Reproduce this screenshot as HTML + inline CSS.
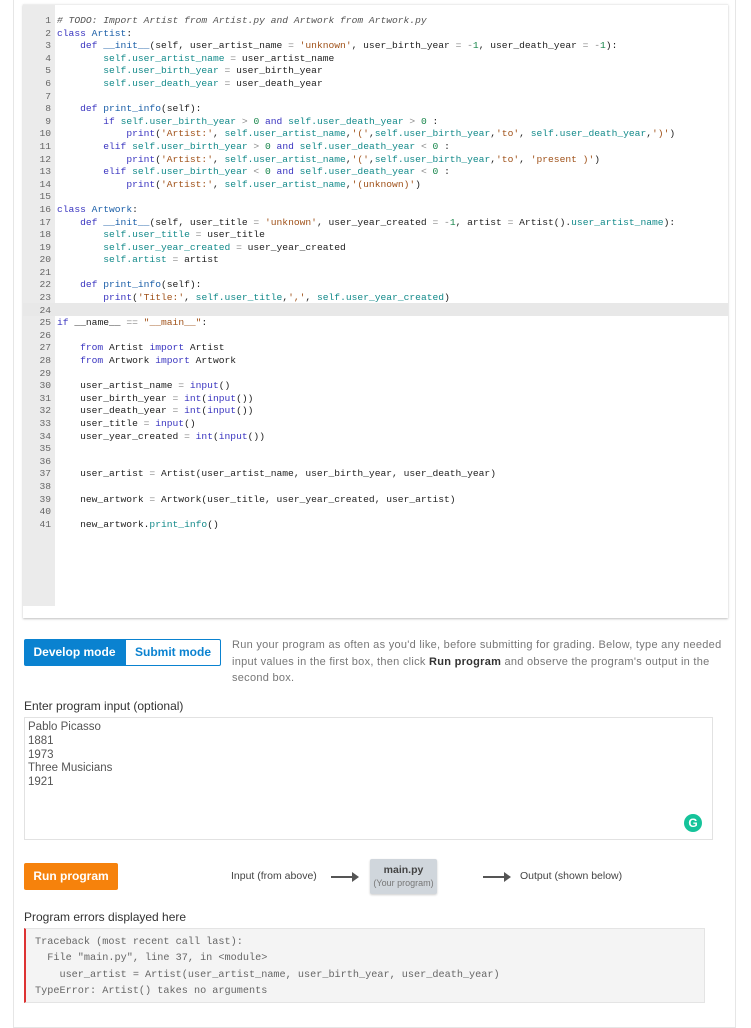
<!DOCTYPE html>
<html><head><meta charset="utf-8"><style>
*{box-sizing:border-box;margin:0;padding:0}
body{width:751px;height:1024px;background:#fff;font-family:"Liberation Sans",sans-serif;position:relative;overflow:hidden}
.card{position:absolute;left:13px;top:-2px;width:723px;height:1030px;border:1px solid #e6e6e6;background:#fff}
.ed{position:absolute;left:23px;top:4px;width:705px;height:614px;background:#fff;box-shadow:0 1px 2px rgba(0,0,0,.25);border-top:1px solid #eee}
.gut{position:absolute;left:0;top:0;width:32px;height:601px;background:#ebebeb}
.code{position:absolute;left:0;top:10px;font-family:"Liberation Mono",monospace;font-size:9.65px;line-height:12.6px;white-space:pre;color:#222}
.ln{display:inline-block;width:28px;text-align:right;color:#666;margin-right:6px}
.hl{position:absolute;left:0;top:298px;width:705px;height:12.6px;background:#e8e8e8}
.k{color:#3a35c0}.d{color:#1b5fa8}.s{color:#a0521a}.n{color:#16854a}.v{color:#138a8a}.c{color:#555;font-style:italic}.o{color:#888}
.btn1{position:absolute;left:24px;top:639px;width:101px;height:27px;background:#0a82d0;color:#fff;font-weight:bold;font-size:12px;line-height:27px;text-align:center;border-radius:2px 0 0 2px}
.btn2{position:absolute;left:125px;top:639px;width:96px;height:27px;border:1px solid #0a82d0;color:#0a82d0;font-weight:bold;font-size:12px;line-height:25px;text-align:center;border-radius:0 2px 2px 0}
.desc{position:absolute;left:232px;top:637px;width:510px;font-size:11px;line-height:16.5px;color:#777;white-space:nowrap;letter-spacing:0.28px}
.lbl{position:absolute;left:24px;font-size:12px;color:#333}
.ta{position:absolute;left:24px;top:717px;width:689px;height:123px;border:1px solid #e2e2e2;padding:3px 3px;font-size:11.5px;line-height:13.8px;color:#555}
.g{position:absolute;left:684px;top:814px;width:18px;height:18px;border-radius:50%;background:#15c39a;color:#fff;font-size:12px;font-weight:bold;text-align:center;line-height:18px}
.run{position:absolute;left:24px;top:863px;width:94px;height:27px;background:#f6820c;color:#fff;font-weight:bold;font-size:12px;line-height:27px;text-align:center;border-radius:2px}
.sm{position:absolute;font-size:10.5px;color:#444}
.arr{position:absolute;width:26px;height:2px;background:#555}
.arr:after{content:"";position:absolute;right:-2px;top:-4px;border-left:7px solid #555;border-top:5px solid transparent;border-bottom:5px solid transparent}
.mp{position:absolute;left:370px;top:859px;width:67px;height:35px;background:#d0d6dc;border-radius:2px;text-align:center;box-shadow:0 1px 2px rgba(0,0,0,.2)}
.err{position:absolute;left:24px;top:928px;width:681px;height:75px;background:#f4f4f4;border:1px solid #e4e4e4;border-left:2px solid #d33;padding:6px 0 0 9px;font-family:"Liberation Mono",monospace;font-size:10.2px;line-height:16.3px;color:#666;white-space:pre}
</style></head><body>
<div class="card"></div>
<div class="ed">
<div class="gut"></div>
<div class="hl"></div>
<div class="code"><span class="ln">1</span><span class="c"># TODO: Import Artist from Artist.py and Artwork from Artwork.py</span>
<span class="ln">2</span><span class="k">class</span> <span class="d">Artist</span>:
<span class="ln">3</span>    <span class="k">def</span> <span class="d">__init__</span>(self, user_artist_name <span class="o">=</span> <span class="s">'unknown'</span>, user_birth_year <span class="o">=</span> <span class="o">-</span><span class="n">1</span>, user_death_year <span class="o">=</span> <span class="o">-</span><span class="n">1</span>):
<span class="ln">4</span>        <span class="v">self.user_artist_name</span> <span class="o">=</span> user_artist_name
<span class="ln">5</span>        <span class="v">self.user_birth_year</span> <span class="o">=</span> user_birth_year
<span class="ln">6</span>        <span class="v">self.user_death_year</span> <span class="o">=</span> user_death_year
<span class="ln">7</span>
<span class="ln">8</span>    <span class="k">def</span> <span class="d">print_info</span>(self):
<span class="ln">9</span>        <span class="k">if</span> <span class="v">self.user_birth_year</span> <span class="o">&gt;</span> <span class="n">0</span> <span class="k">and</span> <span class="v">self.user_death_year</span> <span class="o">&gt;</span> <span class="n">0</span> :
<span class="ln">10</span>            <span class="k">print</span>(<span class="s">'Artist:'</span>, <span class="v">self.user_artist_name</span>,<span class="s">'('</span>,<span class="v">self.user_birth_year</span>,<span class="s">'to'</span>, <span class="v">self.user_death_year</span>,<span class="s">')'</span>)
<span class="ln">11</span>        <span class="k">elif</span> <span class="v">self.user_birth_year</span> <span class="o">&gt;</span> <span class="n">0</span> <span class="k">and</span> <span class="v">self.user_death_year</span> <span class="o">&lt;</span> <span class="n">0</span> :
<span class="ln">12</span>            <span class="k">print</span>(<span class="s">'Artist:'</span>, <span class="v">self.user_artist_name</span>,<span class="s">'('</span>,<span class="v">self.user_birth_year</span>,<span class="s">'to'</span>, <span class="s">'present )'</span>)
<span class="ln">13</span>        <span class="k">elif</span> <span class="v">self.user_birth_year</span> <span class="o">&lt;</span> <span class="n">0</span> <span class="k">and</span> <span class="v">self.user_death_year</span> <span class="o">&lt;</span> <span class="n">0</span> :
<span class="ln">14</span>            <span class="k">print</span>(<span class="s">'Artist:'</span>, <span class="v">self.user_artist_name</span>,<span class="s">'(unknown)'</span>)
<span class="ln">15</span>
<span class="ln">16</span><span class="k">class</span> <span class="d">Artwork</span>:
<span class="ln">17</span>    <span class="k">def</span> <span class="d">__init__</span>(self, user_title <span class="o">=</span> <span class="s">'unknown'</span>, user_year_created <span class="o">=</span> <span class="o">-</span><span class="n">1</span>, artist <span class="o">=</span> Artist().<span class="v">user_artist_name</span>):
<span class="ln">18</span>        <span class="v">self.user_title</span> <span class="o">=</span> user_title
<span class="ln">19</span>        <span class="v">self.user_year_created</span> <span class="o">=</span> user_year_created
<span class="ln">20</span>        <span class="v">self.artist</span> <span class="o">=</span> artist
<span class="ln">21</span>
<span class="ln">22</span>    <span class="k">def</span> <span class="d">print_info</span>(self):
<span class="ln">23</span>        <span class="k">print</span>(<span class="s">'Title:'</span>, <span class="v">self.user_title</span>,<span class="s">','</span>, <span class="v">self.user_year_created</span>)
<span class="ln">24</span>
<span class="ln">25</span><span class="k">if</span> __name__ <span class="o">==</span> <span class="s">"__main__"</span>:
<span class="ln">26</span>
<span class="ln">27</span>    <span class="k">from</span> Artist <span class="k">import</span> Artist
<span class="ln">28</span>    <span class="k">from</span> Artwork <span class="k">import</span> Artwork
<span class="ln">29</span>
<span class="ln">30</span>    user_artist_name <span class="o">=</span> <span class="k">input</span>()
<span class="ln">31</span>    user_birth_year <span class="o">=</span> <span class="k">int</span>(<span class="k">input</span>())
<span class="ln">32</span>    user_death_year <span class="o">=</span> <span class="k">int</span>(<span class="k">input</span>())
<span class="ln">33</span>    user_title <span class="o">=</span> <span class="k">input</span>()
<span class="ln">34</span>    user_year_created <span class="o">=</span> <span class="k">int</span>(<span class="k">input</span>())
<span class="ln">35</span>
<span class="ln">36</span>
<span class="ln">37</span>    user_artist <span class="o">=</span> Artist(user_artist_name, user_birth_year, user_death_year)
<span class="ln">38</span>
<span class="ln">39</span>    new_artwork <span class="o">=</span> Artwork(user_title, user_year_created, user_artist)
<span class="ln">40</span>
<span class="ln">41</span>    new_artwork.<span class="v">print_info</span>()</div>
</div>
<div class="btn1">Develop mode</div>
<div class="btn2">Submit mode</div>
<div class="desc">Run your program as often as you'd like, before submitting for grading. Below, type any needed<br>input values in the first box, then click <b style="color:#333">Run program</b> and observe the program's output in the<br>second box.</div>
<div class="lbl" style="top:699px">Enter program input (optional)</div>
<div class="ta">Pablo Picasso<br>1881<br>1973<br>Three Musicians<br>1921</div>
<div class="g">G</div>
<div class="run">Run program</div>
<div class="sm" style="left:231px;top:870px">Input (from above)</div>
<div class="arr" style="left:331px;top:876px"></div>
<div class="mp"><div style="font-size:10.5px;font-weight:bold;color:#444;margin-top:5px">main.py</div><div style="font-size:9px;color:#777;margin-top:2px">(Your program)</div></div>
<div class="arr" style="left:483px;top:876px"></div>
<div class="sm" style="left:520px;top:870px">Output (shown below)</div>
<div class="lbl" style="top:910px">Program errors displayed here</div>
<div class="err">Traceback (most recent call last):
  File "main.py", line 37, in &lt;module&gt;
    user_artist = Artist(user_artist_name, user_birth_year, user_death_year)
TypeError: Artist() takes no arguments</div>
</body></html>
